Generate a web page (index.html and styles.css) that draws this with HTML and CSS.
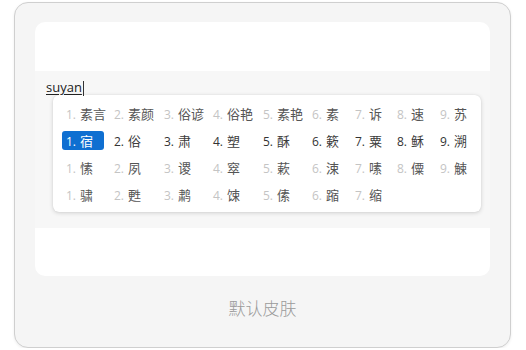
FILE: index.html
```html
<!DOCTYPE html>
<html lang="zh-CN">
<head>
<meta charset="utf-8">
<title>默认皮肤</title>
<link rel="stylesheet" href="styles.css">
</head>
<body>
<div class="frame">
  <div class="panel">
    <div class="band">
      <div class="input"><span class="preedit">suyan</span><span class="caret"></span></div>
      <div class="popup">
        <div class="grid">
          <span class="cand dim"><i>1.</i>素言</span>
          <span class="cand dim"><i>2.</i>素颜</span>
          <span class="cand dim"><i>3.</i>俗谚</span>
          <span class="cand dim"><i>4.</i>俗艳</span>
          <span class="cand dim"><i>5.</i>素艳</span>
          <span class="cand dim"><i>6.</i>素</span>
          <span class="cand dim"><i>7.</i>诉</span>
          <span class="cand dim"><i>8.</i>速</span>
          <span class="cand dim"><i>9.</i>苏</span>

          <span class="cand sel"><i>1.</i>宿</span>
          <span class="cand"><i>2.</i>俗</span>
          <span class="cand"><i>3.</i>肃</span>
          <span class="cand"><i>4.</i>塑</span>
          <span class="cand"><i>5.</i>酥</span>
          <span class="cand"><i>6.</i>簌</span>
          <span class="cand"><i>7.</i>粟</span>
          <span class="cand"><i>8.</i>稣</span>
          <span class="cand"><i>9.</i>溯</span>

          <span class="cand dim"><i>1.</i>愫</span>
          <span class="cand dim"><i>2.</i>夙</span>
          <span class="cand dim"><i>3.</i>谡</span>
          <span class="cand dim"><i>4.</i>窣</span>
          <span class="cand dim"><i>5.</i>蔌</span>
          <span class="cand dim"><i>6.</i>涑</span>
          <span class="cand dim"><i>7.</i>嗉</span>
          <span class="cand dim"><i>8.</i>僳</span>
          <span class="cand dim"><i>9.</i>觫</span>

          <span class="cand dim"><i>1.</i>骕</span>
          <span class="cand dim"><i>2.</i>甦</span>
          <span class="cand dim"><i>3.</i>鹔</span>
          <span class="cand dim"><i>4.</i>𫗧</span>
          <span class="cand dim"><i>5.</i>傃</span>
          <span class="cand dim"><i>6.</i>蹜</span>
          <span class="cand dim"><i>7.</i>缩</span>
        </div>
      </div>
    </div>
  </div>
  <div class="label">默认皮肤</div>
</div>
</body>
</html>
```
FILE: styles.css
```css
html, body {
  margin: 0;
  padding: 0;
  background: #ffffff;
}
body {
  font-family: "Noto Sans", "Noto Sans CJK SC", sans-serif;
}
.frame {
  box-sizing: border-box;
  width: 497px;
  height: 346px;
  margin: 2px 0 0 14px;
  background: #f5f5f5;
  border: 1px solid #cfcfcf;
  border-radius: 14px;
  box-shadow: 0 1px 3px rgba(0,0,0,0.07);
  display: flex;
  flex-direction: column;
  align-items: center;
}
.panel {
  box-sizing: border-box;
  width: 455px;
  height: 254px;
  margin-top: 19px;
  background: #ffffff;
  border-radius: 10px;
  padding-top: 49px;
}
.band {
  box-sizing: border-box;
  height: 157px;
  background: #f7f7f7;
  padding: 7px 0 0 11px;
}
.input {
  height: 17px;
  display: flex;
  align-items: flex-end;
}
.preedit {
  font-family: "Open Sans", "Noto Sans", sans-serif;
  font-size: 13px;
  line-height: 15px;
  color: #222;
  text-decoration: underline;
  text-underline-offset: 2px;
  text-decoration-thickness: 1px;
}
.caret {
  width: 1px;
  height: 15px;
  background: #333;
  margin-left: 1px;
  margin-bottom: -1px;
}
.popup {
  box-sizing: border-box;
  width: 428px;
  height: 117px;
  margin: 0 0 0 7px;
  background: #ffffff;
  border-radius: 6px;
  box-shadow: 0 1px 4px rgba(0,0,0,0.16), 0 0 1px rgba(0,0,0,0.12);
  padding: 5px 0 0 9px;
}
.grid {
  display: grid;
  grid-template-columns: 48px 50px 49px 50px 49px 43px 42px 43px 40px;
  grid-auto-rows: 27px;
  align-items: center;
}
.cand {
  justify-self: start;
  box-sizing: border-box;
  height: 19px;
  padding: 0 4px;
  border-radius: 3px;
  font-family: "Noto Sans CJK SC", sans-serif;
  font-size: 13px;
  line-height: 19px;
  color: #3c3c3c;
  white-space: nowrap;
}
.cand i {
  font-style: normal;
  font-family: "Open Sans", "Noto Sans", sans-serif;
  font-size: 12px;
  color: #333;
  margin-right: 4px;
}
.cand.dim {
  color: #555;
}
.cand.dim i {
  color: #c4c4c4;
}
.cand.sel {
  width: 42px;
  background: #0f6fd1;
  color: #ffffff;
}
.cand.sel i {
  color: #ffffff;
}
.label {
  margin-top: 19px;
  font-family: "Noto Sans CJK SC", sans-serif;
  font-size: 17px;
  font-weight: 300;
  color: #9a9a9a;
}
```
